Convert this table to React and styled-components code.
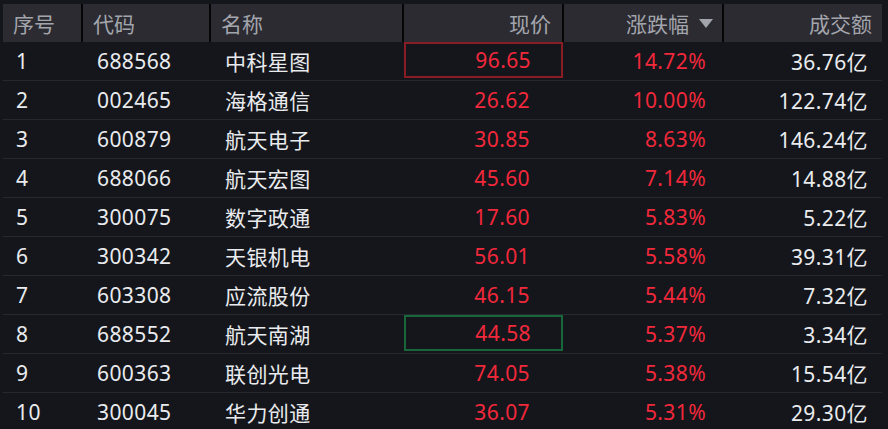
import React from "react";
import styled, { createGlobalStyle } from "styled-components";

const Global = createGlobalStyle`
  html, body { margin: 0; padding: 0; background: #14161b; }
  body { font-family: "Noto Sans", "Noto Sans CJK SC", sans-serif; }
`;

const COLS = "78px 126px 191px 158px 158px 158px";

const Wrap = styled.div`
  width: 888px;
  height: 429px;
  background: #14161b;
  padding: 4px 6px 0 3px;
  box-sizing: border-box;
  overflow: hidden;
`;

const HeaderRow = styled.div`
  display: grid;
  grid-template-columns: ${COLS};
  column-gap: 2px;
  background: #050506;
  height: 38px;
`;

const HeadCell = styled.div`
  background: #2b2b31;
  color: #a3a5ad;
  font-size: 21px;
  display: flex;
  align-items: center;
  justify-content: ${(p) => (p.$right ? "flex-end" : "flex-start")};
  padding: ${(p) => (p.$right ? `0 ${p.$pr ?? 10}px 0 0` : "0 0 0 10px")};
  gap: 10px;
  white-space: nowrap;
`;

const SortArrow = styled.svg`
  width: 14px;
  height: 9px;
  flex: none;
`;

const Row = styled.div`
  display: grid;
  grid-template-columns: ${COLS};
  column-gap: 2px;
  height: 39px;
  box-sizing: border-box;
  border-bottom: 1px solid #262830;
`;

const Cell = styled.div`
  font-size: 21px;
  letter-spacing: 0.4px;
  color: ${(p) => (p.$red ? "#f2283b" : "#e9ebee")};
  display: flex;
  align-items: center;
  justify-content: ${(p) => (p.$right ? "flex-end" : "flex-start")};
  padding: ${(p) => (p.$right ? `0 ${p.$pr}px 0 0` : `0 0 0 ${p.$pl ?? 14}px`)};
  white-space: nowrap;
  box-sizing: border-box;
  height: ${(p) => (p.$frame ? "36px" : "38px")};
  border: ${(p) =>
    p.$frame === "red"
      ? "2px solid #8a1c24"
      : p.$frame === "green"
      ? "2px solid #17673a"
      : "none"};
  margin-right: ${(p) => (p.$frame ? "-1px" : "0")};
`;

const rows = [
  ["1", "688568", "中科星图", "96.65", "14.72%", "36.76亿", "red"],
  ["2", "002465", "海格通信", "26.62", "10.00%", "122.74亿"],
  ["3", "600879", "航天电子", "30.85", "8.63%", "146.24亿"],
  ["4", "688066", "航天宏图", "45.60", "7.14%", "14.88亿"],
  ["5", "300075", "数字政通", "17.60", "5.83%", "5.22亿"],
  ["6", "300342", "天银机电", "56.01", "5.58%", "39.31亿"],
  ["7", "603308", "应流股份", "46.15", "5.44%", "7.32亿"],
  ["8", "688552", "航天南湖", "44.58", "5.37%", "3.34亿", "green"],
  ["9", "600363", "联创光电", "74.05", "5.38%", "15.54亿"],
  ["10", "300045", "华力创通", "36.07", "5.31%", "29.30亿"],
];

export default function App() {
  return (
    <Wrap>
      <Global />
      <HeaderRow>
        <HeadCell>序号</HeadCell>
        <HeadCell>代码</HeadCell>
        <HeadCell>名称</HeadCell>
        <HeadCell $right $pr={11}>现价</HeadCell>
        <HeadCell $right $pr={9}>
          涨跌幅
          <SortArrow viewBox="0 0 14 9">
            <path d="M0 0 H14 L7 9 Z" fill="#a3a5ad" />
          </SortArrow>
        </HeadCell>
        <HeadCell $right $pr={10}>成交额</HeadCell>
      </HeaderRow>
      {rows.map((r) => (
        <Row key={r[0]}>
          <Cell $pl={13}>{r[0]}</Cell>
          <Cell>{r[1]}</Cell>
          <Cell>{r[2]}</Cell>
          <Cell $right $red $pr={r[6] ? 30 : 32} $frame={r[6]}>{r[3]}</Cell>
          <Cell $right $red $pr={16}>{r[4]}</Cell>
          <Cell $right $pr={14}>{r[5]}</Cell>
        </Row>
      ))}
    </Wrap>
  );
}
